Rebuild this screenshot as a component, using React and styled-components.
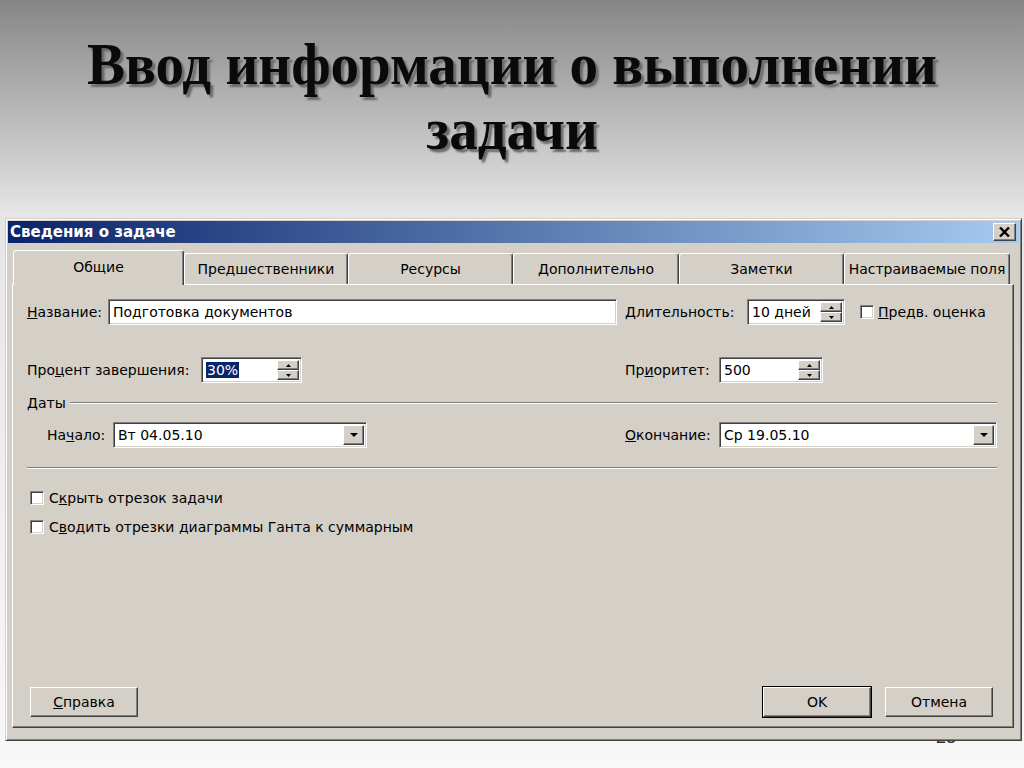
import React from 'react'
import styled, { createGlobalStyle, css } from 'styled-components'

const Global = createGlobalStyle`
  html, body { margin: 0; padding: 0; }
  body { font-family: "DejaVu Sans", "Liberation Sans", sans-serif; }
`

const raised = css`
  border: 1px solid;
  border-color: #fff #404040 #404040 #fff;
  box-shadow: inset -1px -1px #808080, inset 1px 1px #d4d0c8;
`
const sunken = css`
  border: 1px solid;
  border-color: #808080 #fff #fff #808080;
  box-shadow: inset 1px 1px #404040, inset -1px -1px #d4d0c8;
`

const Page = styled.div`
  width: 1024px;
  height: 768px;
  overflow: hidden;
  background: linear-gradient(to bottom, #868686 0px, #e6e6e6 215px, #f8f8f8 768px);
`

const Header = styled.h1`
  box-sizing: border-box;
  height: 218px;
  margin: 0;
  padding-top: 32px;
  text-align: center;
  font-family: "Liberation Serif", serif;
  font-weight: bold;
  font-size: 60px;
  line-height: 65px;
  color: #0a0a0a;
  text-shadow: 3px 3px 2px #6a6a6a;
  transform: scaleX(0.95);
`

const Dialog = styled.div`
  position: relative;
  z-index: 1;
  box-sizing: border-box;
  width: 1017px;
  height: 523px;
  margin-left: 5px;
  padding: 2px;
  background: #d4d0c8;
  border: 1px solid;
  border-color: #d4d0c8 #404040 #404040 #d4d0c8;
  box-shadow: inset 1px 1px #fff, inset -1px -1px #808080;
  display: flex;
  flex-direction: column;
  font-size: 14px;
  color: #000;
`

const TitleBar = styled.div`
  height: 22px;
  flex: none;
  display: flex;
  align-items: center;
  justify-content: space-between;
  padding-left: 2px;
  background: linear-gradient(to right, #0a246a, #a6caf0);
  color: #fff;
  font-weight: bold;
  font-size: 15px;
`

const CloseBtn = styled.div`
  box-sizing: border-box;
  width: 23px;
  height: 18px;
  margin-right: 3px;
  background: #d4d0c8;
  ${raised};
  display: flex;
  align-items: center;
  justify-content: center;
`

const Body = styled.div`
  flex: 1;
  display: flex;
  flex-direction: column;
  padding: 7px 5px 10px 4px;
`

const TabRow = styled.div`
  display: flex;
  align-items: flex-start;
  height: 34px;
  padding-left: 1px;
  flex: none;
`

const Tab = styled.div`
  box-sizing: border-box;
  width: ${p => p.$w}px;
  height: ${p => (p.$active ? 35 : 31)}px;
  margin-top: ${p => (p.$active ? 0 : 3)}px;
  position: relative;
  z-index: ${p => (p.$active ? 2 : 0)};
  background: #d4d0c8;
  border-top: 1px solid #fff;
  border-left: 1px solid #fff;
  border-right: 1px solid #404040;
  border-radius: 3px 3px 0 0;
  box-shadow: inset -1px 0 #808080;
  display: flex;
  align-items: center;
  justify-content: center;
  padding-bottom: ${p => (p.$active ? 2 : 0)}px;
  white-space: nowrap;
  overflow: hidden;
`

const Panel = styled.div`
  flex: 1;
  display: flex;
  flex-direction: column;
  padding: 14px 16px 10px 14px;
  border: 1px solid;
  border-color: #fff #404040 #404040 #fff;
  box-shadow: inset -1px -1px #808080;
`

const Row = styled.div`
  display: grid;
  grid-template-columns: 590px 1fr;
  column-gap: 8px;
  height: 26px;
  margin-top: ${p => p.$mt || 0}px;
`

const Cell = styled.div`
  display: flex;
  align-items: center;
  min-width: 0;
`

const Label = styled.span`
  box-sizing: border-box;
  width: ${p => (p.$w ? `${p.$w}px` : 'auto')};
  padding-left: ${p => p.$pl || 0}px;
  flex: none;
  white-space: nowrap;
`

const Field = styled.div`
  box-sizing: border-box;
  height: 26px;
  width: ${p => (p.$w ? `${p.$w}px` : 'auto')};
  flex: ${p => (p.$w ? 'none' : 1)};
  background: #fff;
  ${sunken};
  display: flex;
  align-items: stretch;
  padding: 2px;
`

const FieldText = styled.div`
  flex: 1;
  display: flex;
  align-items: center;
  padding-left: 2px;
  white-space: nowrap;
`

const Selected = styled.span`
  background: #0a246a;
  color: #fff;
  padding: 0 1px;
`

const SpinBox = styled.div`
  width: 22px;
  display: flex;
  flex-direction: column;
`

const SpinHalf = styled.div`
  box-sizing: border-box;
  flex: 1;
  background: #d4d0c8;
  ${raised};
  display: flex;
  align-items: center;
  justify-content: center;
`

const DropBtn = styled.div`
  box-sizing: border-box;
  width: 21px;
  background: #d4d0c8;
  ${raised};
  display: flex;
  align-items: center;
  justify-content: center;
`

const Check = styled.span`
  box-sizing: border-box;
  width: 14px;
  height: 14px;
  flex: none;
  background: #fff;
  ${sunken};
  margin-right: ${p => p.$mr || 5}px;
  margin-left: ${p => p.$ml || 0}px;
`

const Group = styled.div`
  display: flex;
  align-items: center;
  gap: 4px;
  margin-top: 13px;
  height: 14px;
  &::after {
    content: '';
    flex: 1;
    height: 0;
    border-top: 1px solid #808080;
    border-bottom: 1px solid #fff;
  }
`

const Separator = styled.div`
  margin-top: ${p => p.$mt}px;
  border-top: 1px solid #808080;
  border-bottom: 1px solid #fff;
`

const CheckRow = styled.div`
  display: flex;
  align-items: center;
  height: 20px;
  margin-top: ${p => p.$mt}px;
  padding-left: 3px;
`

const Spacer = styled.div`
  flex: 1;
`

const ButtonRow = styled.div`
  display: flex;
  align-items: center;
  padding: 0 4px 0 3px;
  gap: 14px;
`

const Button = styled.div`
  box-sizing: border-box;
  width: 108px;
  height: 30px;
  background: #d4d0c8;
  display: flex;
  align-items: center;
  justify-content: center;
  margin-left: ${p => (p.$push ? 'auto' : '0')};
  ${raised};
  ${p =>
    p.$default &&
    css`
      outline: 1px solid #000;
      outline-offset: 0;
    `}
`

const SlideNo = styled.div`
  position: relative;
  z-index: 0;
  margin-top: -14px;
  padding-left: 936px;
  font-family: "Liberation Sans", sans-serif;
  font-size: 18px;
  color: #333;
`

const Arrow = ({ up, w = 5, h = 3 }) => (
  <svg width={w} height={h} viewBox={`0 0 ${w} ${h}`}>
    <polygon points={up ? `0,${h} ${w},${h} ${w / 2},0` : `0,0 ${w},0 ${w / 2},${h}`} fill="#000" />
  </svg>
)

const Spin = () => (
  <SpinBox>
    <SpinHalf><Arrow up /></SpinHalf>
    <SpinHalf><Arrow /></SpinHalf>
  </SpinBox>
)

const tabs = [
  ['Общие', 171],
  ['Предшественники', 164],
  ['Ресурсы', 165],
  ['Дополнительно', 166],
  ['Заметки', 165],
  ['Настраиваемые поля', 166],
]

export default function App() {
  return (
    <Page>
      <Global />
      <Header>
        Ввод информации о выполнении
        <br />
        задачи
      </Header>
      <Dialog>
        <TitleBar>
          <span>Сведения о задаче</span>
          <CloseBtn>
            <svg width="11" height="10" viewBox="0 0 11 10">
              <path d="M1 0.5 L10 9.5 M10 0.5 L1 9.5" stroke="#000" strokeWidth="2.4" />
            </svg>
          </CloseBtn>
        </TitleBar>
        <Body>
          <TabRow>
            {tabs.map(([t, w], i) => (
              <Tab key={t} $w={w} $active={i === 0}>{t}</Tab>
            ))}
          </TabRow>
          <Panel>
            <Row>
              <Cell>
                <Label $w={81}><u>Н</u>азвание:</Label>
                <Field><FieldText>Подготовка документов</FieldText></Field>
              </Cell>
              <Cell>
                <Label $w={122}><u>Д</u>лительность:</Label>
                <Field $w={98}>
                  <FieldText>10 дней</FieldText>
                  <Spin />
                </Field>
                <Check $ml={15} $mr={4} />
                <span><u>П</u>редв. оценка</span>
              </Cell>
            </Row>
            <Row $mt={32}>
              <Cell>
                <Label $w={174}>Про<u>ц</u>ент завершения:</Label>
                <Field $w={101}>
                  <FieldText><Selected>30%</Selected></FieldText>
                  <Spin />
                </Field>
              </Cell>
              <Cell>
                <Label $w={94}>Пр<u>и</u>оритет:</Label>
                <Field $w={104}>
                  <FieldText>500</FieldText>
                  <Spin />
                </Field>
              </Cell>
            </Row>
            <Group>Даты</Group>
            <Row $mt={12}>
              <Cell>
                <Label $w={86} $pl={20}>На<u>ч</u>ало:</Label>
                <Field $w={254}>
                  <FieldText>Вт 04.05.10</FieldText>
                  <DropBtn><Arrow w={8} h={4} /></DropBtn>
                </Field>
              </Cell>
              <Cell>
                <Label $w={94}><u>О</u>кончание:</Label>
                <Field>
                  <FieldText>Ср 19.05.10</FieldText>
                  <DropBtn><Arrow w={8} h={4} /></DropBtn>
                </Field>
              </Cell>
            </Row>
            <Separator $mt={19} />
            <CheckRow $mt={19}>
              <Check />
              <span>С<u>к</u>рыть отрезок задачи</span>
            </CheckRow>
            <CheckRow $mt={9}>
              <Check />
              <span>С<u>в</u>одить отрезки диаграммы Ганта к суммарным</span>
            </CheckRow>
            <Spacer />
            <ButtonRow>
              <Button><span><u>С</u>правка</span></Button>
              <Button $push $default>OK</Button>
              <Button>Отмена</Button>
            </ButtonRow>
          </Panel>
        </Body>
      </Dialog>
      <SlideNo>23</SlideNo>
    </Page>
  )
}
